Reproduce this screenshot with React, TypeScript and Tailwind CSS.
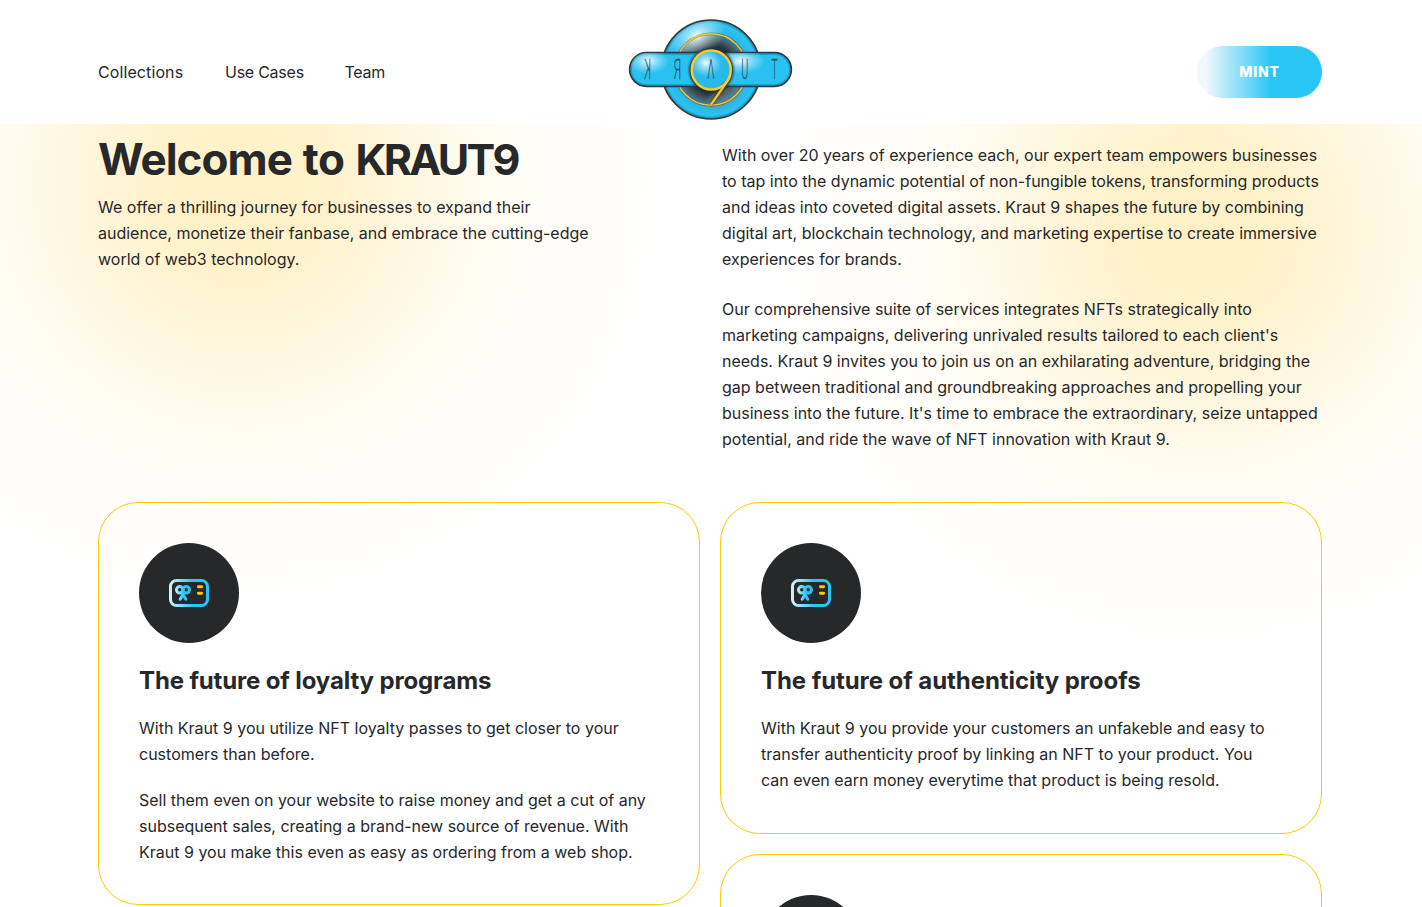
import type { ReactNode } from "react";

const headingFont = "font-[Inter,'Liberation_Sans',sans-serif]";

function Logo() {
  return (
    <svg width="180" height="120" viewBox="0 0 180 120" className="block" role="img" aria-label="KRAUT9">
      <defs>
        <radialGradient id="disc" cx="91" cy="59.5" r="49.5" gradientUnits="userSpaceOnUse">
          <stop offset="0" stopColor="#293238" />
          <stop offset=".48" stopColor="#293238" />
          <stop offset=".61" stopColor="#435d68" />
          <stop offset=".69" stopColor="#397d98" />
          <stop offset=".77" stopColor="#2ab7e6" />
          <stop offset=".93" stopColor="#2ac3f4" />
          <stop offset="1" stopColor="#237ea0" />
        </radialGradient>
        <radialGradient id="shine">
          <stop offset="0" stopColor="#fff" stopOpacity=".95" />
          <stop offset=".4" stopColor="#e3f5ff" stopOpacity=".55" />
          <stop offset="1" stopColor="#bbecff" stopOpacity="0" />
        </radialGradient>
        <clipPath id="discClip"><circle cx="91" cy="59.5" r="48.5" /></clipPath>
        <clipPath id="barClip"><rect x="10" y="43" width="161" height="33" rx="16.5" /></clipPath>
        <filter id="soft" x="-30%" y="-30%" width="160%" height="160%"><feGaussianBlur stdDeviation="1.2" /></filter>
      </defs>
      <circle cx="91" cy="59.5" r="49.5" fill="url(#disc)" stroke="#343b35" strokeWidth="1.7" />
      <g clipPath="url(#discClip)">
        <ellipse cx="77" cy="26" rx="31" ry="21" fill="url(#shine)" transform="rotate(-28 77 26)" />
        <ellipse cx="104" cy="87" rx="18" ry="10" fill="#7d959b" opacity=".35" filter="url(#soft)" transform="rotate(-30 104 87)" />
      </g>
      <circle cx="91" cy="59.5" r="35.8" fill="none" stroke="#554619" strokeWidth="2.4" opacity=".5" />
      <circle cx="91" cy="59.5" r="35.8" fill="none" stroke="#f6c42c" strokeWidth="1.5" />
      <rect x="9.7" y="42.7" width="161.6" height="33.6" rx="16.8" fill="#29c1f2" stroke="#273943" strokeWidth="1.8" />
      <rect x="11.2" y="44.2" width="158.6" height="30.6" rx="15.3" fill="none" stroke="#178aad" strokeWidth="1.4" opacity=".6" />
      <g clipPath="url(#barClip)">
        <ellipse cx="28" cy="51" rx="21" ry="13" fill="url(#shine)" />
        <ellipse cx="121" cy="51" rx="24" ry="13" fill="url(#shine)" />
      </g>
      <circle cx="91.3" cy="60" r="22.3" fill="#1f3039" filter="url(#soft)" />
      <circle cx="91.3" cy="60" r="19" fill="#29b9ea" />
      <ellipse cx="86" cy="53" rx="16" ry="14" fill="url(#shine)" />
      <path d="M106 73 L91 94.5" stroke="#37341d" strokeWidth="4" opacity=".6" filter="url(#soft)" />
      <circle cx="91.3" cy="60" r="19.5" fill="none" stroke="#ffc928" strokeWidth="2.5" />
      <path d="M110.2 64.5 C109.2 69 107 72 104 76 L91 94.7" fill="none" stroke="#ffc928" strokeWidth="2.2" />
      <g fill="#24566b" stroke="#24566b" strokeWidth=".25" fontFamily="Roboto, 'Liberation Sans', sans-serif" fontSize="27" fontWeight="300" textAnchor="middle">
        <text transform="translate(27.5 69) scale(-.4 1)">K</text>
        <text transform="translate(57.5 69) scale(-.45 1)">R</text>
        <text transform="translate(91 69) scale(.42 1)">Λ</text>
        <text transform="translate(124.7 69) scale(.4 1)">U</text>
        <text transform="translate(154.5 69) scale(.38 1)">T</text>
      </g>
    </svg>
  );
}

function PassIcon({ id }: { id: string }) {
  return (
    <div className="flex size-[100px] shrink-0 items-center justify-center rounded-full bg-[#27282a]">
      <svg width="40" height="28" viewBox="0 0 40 28" fill="none">
        <defs>
          <linearGradient id={id} x1="0" y1="0" x2="23" y2="0" gradientUnits="userSpaceOnUse">
            <stop stopColor="#d8f2fb" />
            <stop offset="1" stopColor="#29c5f5" />
          </linearGradient>
          <linearGradient id={`${id}-ribbon`} x1="5" y1="0" x2="15" y2="0" gradientUnits="userSpaceOnUse">
            <stop stopColor="#d8f2fb" />
            <stop offset="1" stopColor="#29c5f5" />
          </linearGradient>
        </defs>
        <rect x="1.5" y="1.5" width="37" height="25" rx="6" stroke={`url(#${id})`} strokeWidth="3" />
        <g stroke={`url(#${id}-ribbon)`} strokeWidth="3" strokeLinecap="round" strokeLinejoin="round">
          <circle cx="10.8" cy="10.8" r="3.3" />
          <circle cx="17.2" cy="10.8" r="3.3" />
          <path d="M15.2 13.5 L11.2 20.3M12.8 13.5 L16.8 20.3" />
        </g>
        <path d="M29.4 7.8h3.2M29.4 14.2h3.2" stroke="#ffc90a" strokeWidth="2.9" strokeLinecap="round" />
      </svg>
    </div>
  );
}

function Card({ id, title, titleClass, className, children }: { id: string; title?: string; titleClass?: string; className: string; children?: ReactNode }) {
  return (
    <article className={`rounded-[40px] border border-[#ffcb05] p-10 ${className}`}>
      <PassIcon id={id} />
      {title && <h2 className={`mt-5 text-[24px] leading-[36px] font-bold whitespace-nowrap ${headingFont} ${titleClass}`}>{title}</h2>}
      {children}
    </article>
  );
}

export default function App() {
  return (
    <div className="h-[907px] w-full overflow-hidden bg-white font-[Inter,'Liberation_Sans',sans-serif] text-base leading-[26px] text-[#27282a]">
      <header className="flex h-[124px] bg-white pr-[100px] pl-[98px]">
        <nav className={`flex w-[522px] gap-10 pt-[59px] font-normal whitespace-nowrap ${headingFont}`}>
          <a className="w-[87px] tracking-[0.1px]">Collections</a>
          <a className="w-[79.5px] tracking-[-0.25px]">Use Cases</a>
          <a className="w-[41px] tracking-[-0.3px]">Team</a>
        </nav>
        <div className="h-[120px] w-[180px] pt-[10px]"><Logo /></div>
        <button className={`mt-[46px] ml-auto h-[52px] w-[125px] rounded-full bg-[linear-gradient(90deg,#f1f8fb_0%,#f1f8fb_7%,#29c5f5_60%)] text-[14px] font-extrabold tracking-[0.8px] text-white ${headingFont}`}>MINT</button>
      </header>
      <main className="h-[783px] bg-[radial-gradient(circle_440px_at_240px_62px,#fbc00038_0%,#fbc00033_20%,#fbc00022_36%,#fbc00010_54%,#fbc00007_70%,#fbc00003_86%,#fbc00000_100%),radial-gradient(circle_440px_at_1200px_106px,#fbc00038_0%,#fbc00033_20%,#fbc00022_36%,#fbc00010_54%,#fbc00007_70%,#fbc00003_86%,#fbc00000_100%)] pr-[100px] pl-[98px]">
        <section className="flex h-[378px] justify-between">
          <div className="w-[520px] pt-[6px]">
            <h1 className={`flex gap-[11px] text-[44px] leading-[58px] font-bold whitespace-nowrap ${headingFont}`}>
              <span className="tracking-[-1px]">Welcome</span>
              <span className="tracking-[-0.5px]">to</span>
              <span className="text-[43px] tracking-[-2.7px]">KRAUT9</span>
            </h1>
            <p className="mt-[6px] whitespace-nowrap">We offer a thrilling journey for businesses to expand their<br />audience, monetize their fanbase, and embrace the cutting-edge<br />world of web3 technology.</p>
          </div>
          <div className="w-[602px] pt-[18px] pl-[2px] whitespace-nowrap">
            <p>With over 20 years of experience each, our expert team empowers businesses<br />to tap into the dynamic potential of non-fungible tokens, transforming products<br />and ideas into coveted digital assets. Kraut 9 shapes the future by combining<br />digital art, blockchain technology, and marketing expertise to create immersive<br />experiences for brands.</p>
            <p className="mt-6">Our comprehensive suite of services integrates NFTs strategically into<br />marketing campaigns, delivering unrivaled results tailored to each client's<br />needs. Kraut 9 invites you to join us on an exhilarating adventure, bridging the<br />gap between traditional and groundbreaking approaches and propelling your<br />business into the future. It's time to embrace the extraordinary, seize untapped<br />potential, and ride the wave of NFT innovation with Kraut 9.</p>
          </div>
        </section>
        <section className="flex items-start justify-between whitespace-nowrap">
          <Card id="loyalty" title="The future of loyalty programs" titleClass="tracking-[-0.14px]" className="h-[403px] w-[602px]">
            <p className="mt-4">With Kraut 9 you utilize NFT loyalty passes to get closer to your<br />customers than before.</p>
            <p className="mt-5">Sell them even on your website to raise money and get a cut of any<br />subsequent sales, creating a brand-new source of revenue. With<br />Kraut 9 you make this even as easy as ordering from a web shop.</p>
          </Card>
          <div className="flex w-[602px] flex-col gap-5">
            <Card id="authenticity" title="The future of authenticity proofs" titleClass="tracking-[-0.07px]" className="h-[332px]">
              <p className="mt-4">With Kraut 9 you provide your customers an unfakeble and easy to<br />transfer authenticity proof by linking an NFT to your product. You<br />can even earn money everytime that product is being resold.</p>
            </Card>
            <Card id="third" className="h-[300px]" />
          </div>
        </section>
      </main>
    </div>
  );
}
